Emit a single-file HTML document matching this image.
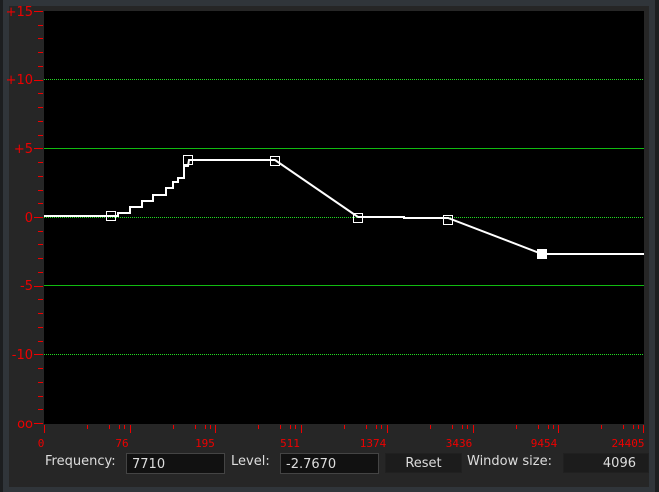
<!DOCTYPE html>
<html><head><meta charset="utf-8"><style>
body{margin:0;width:659px;height:492px;background:#30353a;overflow:hidden;font-family:"DejaVu Sans","Liberation Sans",sans-serif;position:relative}
.panel{position:absolute;left:9px;top:6px;width:640px;height:481px;background:#262626}
.lbl{position:absolute;color:#ddd;font-size:13px;top:454px}
.inp{position:absolute;top:453px;height:21px;background:#111;border:1px solid #444;color:#ddd;font-size:13px;line-height:21px;box-sizing:border-box;padding-left:5px}
.btn{position:absolute;top:453px;height:20px;background:#1c1c1c;border:1px solid #202020;color:#ddd;font-size:13px;line-height:19px;text-align:center;box-sizing:border-box}
</style></head><body>
<div style="position:absolute;left:0;top:0;width:3px;height:492px;background:#1c1e20"></div>
<div style="position:absolute;left:655px;top:0;width:4px;height:492px;background:#1c1e20"></div>
<div class="panel"></div>
<svg style="position:absolute;left:0;top:0" width="659" height="492">
<rect x="44" y="11" width="600" height="413" fill="#000"/>
<g stroke="#22dd22" stroke-width="1" stroke-dasharray="1 1">
<line x1="44" x2="644" y1="79.5" y2="79.5"/>
<line x1="44" x2="644" y1="217.5" y2="217.5"/>
<line x1="44" x2="644" y1="354.5" y2="354.5"/>
</g>
<g stroke="#11bb11" stroke-width="1">
<line x1="44" x2="644" y1="148.5" y2="148.5"/>
<line x1="44" x2="644" y1="285.5" y2="285.5"/>
</g>
<g stroke="#e00" stroke-width="1" id="yt"></g>
<g stroke="#e00" stroke-width="1" id="xt"></g>
<g fill="#e00" font-size="13" font-family="DejaVu Sans,Liberation Sans,sans-serif" text-anchor="end">
<text x="33" y="16">+15</text><text x="33" y="84">+10</text><text x="33" y="153">+5</text>
<text x="33" y="222">0</text><text x="33" y="290">-5</text><text x="33" y="359">-10</text><text x="33" y="428">oo</text>
</g>
<g fill="#e00" font-size="11" font-family="DejaVu Sans Mono,Liberation Mono,monospace" text-anchor="middle">
<text x="41" y="447">0</text><text x="122" y="447">76</text><text x="205" y="447">195</text><text x="290" y="447">511</text>
<text x="373" y="447">1374</text><text x="459" y="447">3436</text><text x="544" y="447">9454</text><text x="628" y="447">24405</text>
</g>
<polyline fill="none" stroke="#fff" stroke-width="2" points="44,216 118,216 118,213 130,213 130,207 142,207 142,201 153,201 153,195 166,195 166,188 173,188 173,182 178,182 178,178 184,178 184,166 188,166 189,160 275,160 358,217 404,217 404,218 448,218 542,254 644,254"/>
<g fill="none" stroke="#fff" stroke-width="1">
<rect x="106.5" y="211.5" width="9" height="9"/>
<rect x="183.5" y="155.5" width="9" height="9"/>
<rect x="270.5" y="156.5" width="9" height="9"/>
<rect x="353.5" y="213.5" width="9" height="9"/>
<rect x="443.5" y="215.5" width="9" height="9"/>
</g>
<rect x="537" y="249" width="10" height="10" fill="#fff"/>
</svg>
<script>
var ns="http://www.w3.org/2000/svg",yt=document.getElementById('yt'),xt=document.getElementById('xt');
function L(g,a,b,c,d){var l=document.createElementNS(ns,'line');l.setAttribute('x1',a);l.setAttribute('y1',b);l.setAttribute('x2',c);l.setAttribute('y2',d);g.appendChild(l);}
for(var i=0;i<=30;i++){var y=Math.round(11+i*206/15)+.5;L(yt,i%5==0?34:38,y,43,y);}
for(var s=0;s<7;s++){var x0=44+s*85.71;[43,65,75,80].forEach(function(o){var x=Math.round(x0+o)+.5;L(xt,x,425,x,429);});}
for(var s=0;s<=7;s++){var x=Math.round(44+s*85.71)+.5;if(s==7)x=643.5;L(xt,x,425,x,433);}
</script>
<div class="lbl" style="left:45px">Frequency:</div>
<div class="inp" style="left:126px;width:99px">7710</div>
<div class="lbl" style="left:231px">Level:</div>
<div class="inp" style="left:280px;width:99px">-2.7670</div>
<div class="btn" style="left:385px;width:77px">Reset</div>
<div class="lbl" style="left:467px">Window size:</div>
<div class="btn" style="left:563px;width:86px;text-align:right;padding-right:12px">4096</div>
</body></html>
